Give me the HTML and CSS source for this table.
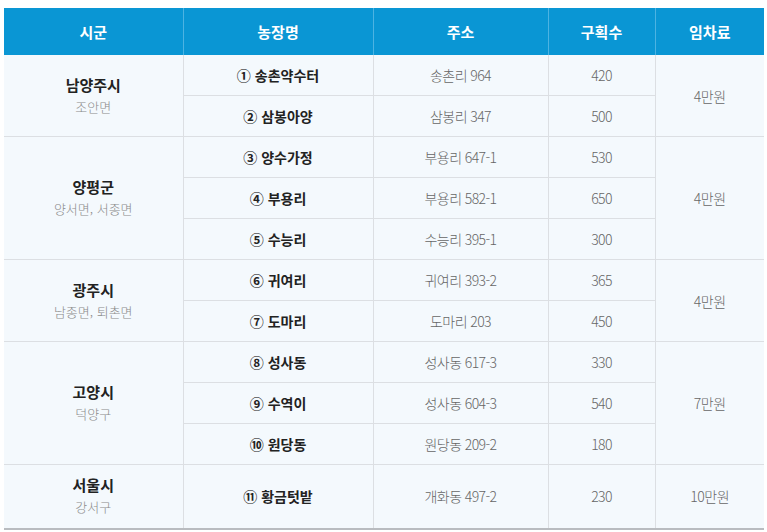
FILE: index.html
```html
<!DOCTYPE html>
<html lang="ko">
<head>
<meta charset="utf-8">
<link rel="stylesheet" href="styles.css">
</head>
<body>
<table class="farm-table">
  <colgroup>
    <col class="c1"><col class="c2"><col class="c3"><col class="c4"><col class="c5">
  </colgroup>
  <thead>
    <tr><th>시군</th><th>농장명</th><th>주소</th><th>구획수</th><th>임차료</th></tr>
  </thead>
  <tbody>
    <tr>
      <td rowspan="2" class="city"><strong>남양주시</strong><span>조안면</span></td>
      <td class="farm">① 송촌약수터</td><td class="addr">송촌리 964</td><td class="num">420</td>
      <td rowspan="2" class="fee">4만원</td>
    </tr>
    <tr><td class="farm">② 삼봉아양</td><td class="addr">삼봉리 347</td><td class="num">500</td></tr>
    <tr>
      <td rowspan="3" class="city"><strong>양평군</strong><span>양서면, 서종면</span></td>
      <td class="farm">③ 양수가정</td><td class="addr">부용리 647-1</td><td class="num">530</td>
      <td rowspan="3" class="fee">4만원</td>
    </tr>
    <tr><td class="farm">④ 부용리</td><td class="addr">부용리 582-1</td><td class="num">650</td></tr>
    <tr><td class="farm">⑤ 수능리</td><td class="addr">수능리 395-1</td><td class="num">300</td></tr>
    <tr>
      <td rowspan="2" class="city"><strong>광주시</strong><span>남종면, 퇴촌면</span></td>
      <td class="farm">⑥ 귀여리</td><td class="addr">귀여리 393-2</td><td class="num">365</td>
      <td rowspan="2" class="fee">4만원</td>
    </tr>
    <tr><td class="farm">⑦ 도마리</td><td class="addr">도마리 203</td><td class="num">450</td></tr>
    <tr>
      <td rowspan="3" class="city"><strong>고양시</strong><span>덕양구</span></td>
      <td class="farm">⑧ 성사동</td><td class="addr">성사동 617-3</td><td class="num">330</td>
      <td rowspan="3" class="fee">7만원</td>
    </tr>
    <tr><td class="farm">⑨ 수역이</td><td class="addr">성사동 604-3</td><td class="num">540</td></tr>
    <tr><td class="farm">⑩ 원당동</td><td class="addr">원당동 209-2</td><td class="num">180</td></tr>
    <tr class="last">
      <td class="city"><strong>서울시</strong><span>강서구</span></td>
      <td class="farm">⑪ 황금텃밭</td><td class="addr">개화동 497-2</td><td class="num">230</td>
      <td class="fee">10만원</td>
    </tr>
  </tbody>
</table>
</body>
</html>
```

FILE: styles.css
```css
html, body {
  margin: 0;
  padding: 0;
  background: #ffffff;
}
body {
  padding: 8px 3px 0 4px;
  font-family: "Noto Sans CJK KR", "Noto Sans", sans-serif;
  color: #222;
}
.farm-table {
  width: 760px;
  border-collapse: collapse;
  table-layout: fixed;
  border-bottom: 2px solid #b9bcc0;
}
.c1 { width: 179px; }
.c2 { width: 190px; }
.c3 { width: 175px; }
.c4 { width: 107px; }
.c5 { width: 109px; }
.farm-table th {
  background: #0a96d4;
  color: #fff;
  font-size: 15px;
  font-weight: 700;
  height: 47px;
  padding: 0;
  border-left: 1px solid #4db3e2;
}
.farm-table th:first-child { border-left: none; }
.farm-table td {
  background: #f4f9fd;
  text-align: center;
  vertical-align: middle;
  padding: 9px 0;
  line-height: 22px;
  border: 1px solid #dcdfe3;
  font-size: 14px;
}
.farm-table tr td:first-child { border-left: none; }
.farm-table td.fee { border-right: none; }
.farm-table tbody tr:first-child td { border-top: none; }
.farm-table tr.last td { padding-bottom: 10px; }
.city strong {
  display: block;
  font-weight: 700;
  font-size: 15px;
  color: #222;
}
.city span {
  display: block;
  font-size: 13px;
  font-weight: 300;
  color: #8a8a8a;
}
.farm {
  font-weight: 700;
  color: #222;
}
.addr {
  font-size: 14px;
  font-weight: 300;
  color: #666;
  letter-spacing: -0.6px;
}
.num {
  font-size: 14px;
  font-weight: 300;
  color: #666;
  letter-spacing: -0.6px;
}
.fee {
  font-size: 14px;
  font-weight: 300;
  color: #666;
  letter-spacing: -0.4px;
}
```
